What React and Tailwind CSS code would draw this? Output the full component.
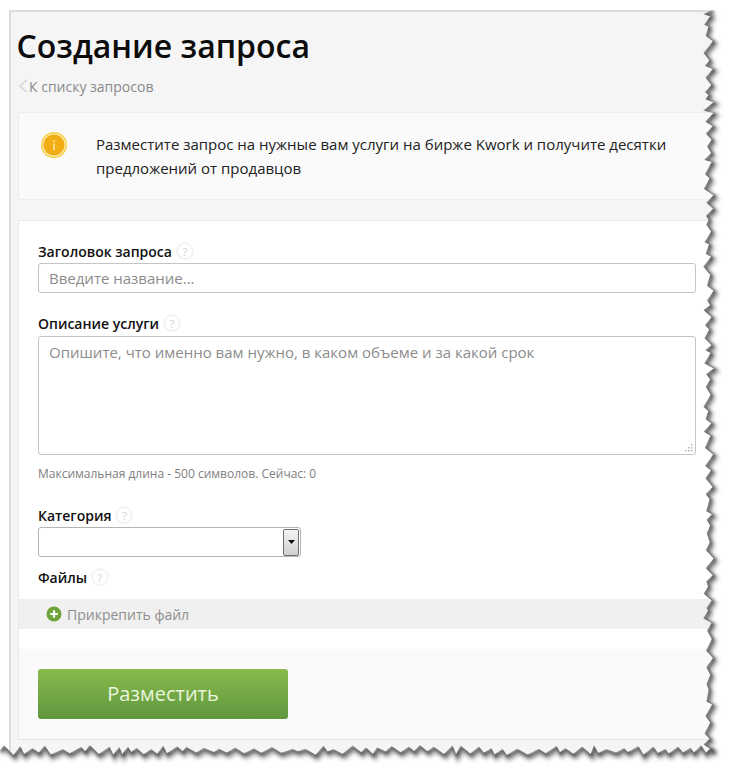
import React from 'react';

// torn paper edge, seeded so the teeth stay the same on every render
function tornPoints() {
  let seed = 23;
  const rnd = () => {
    seed = (seed * 16807) % 2147483647;
    return seed / 2147483647;
  };
  const pts = [[712, 10]];
  let y = 14;
  while (y < 746) {
    pts.push([703 + rnd() * 4, y]);
    y += 2 + rnd() * 7;
    pts.push([708 + rnd() * 6, y]);
    y += 4 + rnd() * 8;
  }
  pts.push([711, 748]);
  let x = 706;
  while (x > 0) {
    pts.push([x, 751 + rnd() * 4]);
    x -= 3 + rnd() * 8;
    pts.push([x, 745 + rnd() * 4]);
    x -= 3 + rnd() * 9;
  }
  pts.push([0, 750]);
  return pts;
}

function TornEdge() {
  const line = tornPoints().map((p) => p[0].toFixed(1) + ',' + p[1].toFixed(1)).join(' ');
  return (
    <svg className="absolute inset-0 pointer-events-none" width="732" height="775" viewBox="0 0 732 775">
      <defs>
        <clipPath id="outside">
          <polygon points={line + ' 0,775 732,775 732,10'} />
        </clipPath>
        <filter id="soft" x="-5%" y="-5%" width="110%" height="110%">
          <feGaussianBlur stdDeviation="1.4" />
        </filter>
        <filter id="wide" x="-5%" y="-5%" width="110%" height="110%">
          <feGaussianBlur stdDeviation="2.2" />
        </filter>
      </defs>
      <polygon points={line + ' 0,775 732,775 732,10'} fill="#ffffff" />
      <g clipPath="url(#outside)">
        <polyline points={line} fill="none" stroke="#9a9a9a" strokeWidth="5" transform="translate(2 3)" filter="url(#wide)" />
        <polyline points={line} fill="none" stroke="#505050" strokeWidth="2.5" transform="translate(1 1.5)" filter="url(#soft)" />
      </g>
    </svg>
  );
}

function Hint() {
  return (
    <span className="inline-flex items-center justify-center w-[18px] h-[18px] rounded-full border-2 border-[#f3f3f3] text-[11px] font-semibold leading-none text-[#dddddd]">
      ?
    </span>
  );
}

function Label({ children }) {
  return (
    <div className="flex items-center gap-[4px] h-[20px] text-[14px] font-semibold text-[#111111]">
      {children}
      <Hint />
    </div>
  );
}

export default function App() {
  return (
    <div className="relative w-[732px] h-[775px] overflow-hidden bg-white font-['Open_Sans',sans-serif]">
      <div className="ml-[9px] mt-[10px] w-[723px] h-[760px] bg-[#f5f5f5] border-t-2 border-l-2 border-[#dcdcdc] pl-[7px]">
        <h1 className="-ml-[1.5px] pt-[12px] text-[32px] leading-[44px] font-semibold text-[#0c0c0c]">Создание запроса</h1>
        <div className="flex items-center mt-[8px] h-[20px] text-[14px] text-[#8a8a8a]">
          <svg width="10" height="14" viewBox="0 0 10 14" className="mr-px">
            <path d="M8.5 1 L2 7 L8.5 13" fill="none" stroke="#d2d2d2" strokeWidth="1.3" />
          </svg>
          К списку запросов
        </div>

        <div className="flex mt-[16px] h-[88px] bg-[#fafafa] border border-[#eeeeee]">
          <svg width="28" height="28" viewBox="0 0 28 28" className="ml-[21px] mt-[18px] shrink-0">
            <circle cx="14" cy="14" r="13" fill="#f6cf3f" />
            <circle cx="14" cy="14" r="11.6" fill="#fff3c4" />
            <circle cx="14" cy="14" r="10.6" fill="#f0ae14" />
            <rect x="13.1" y="12.5" width="1.8" height="6.5" fill="#ffe08a" />
            <rect x="13.1" y="9.2" width="1.8" height="1.9" fill="#ffe08a" />
          </svg>
          <p className="ml-[28px] mt-[19px] w-[600px] text-[15px] leading-[24px] text-[#222222]">
            Разместите запрос на нужные вам услуги на бирже Kwork и получите десятки предложений от продавцов
          </p>
        </div>

        <div className="mt-[20px] bg-white border-t border-l border-[#e8e8e8]">
          <div className="pt-[20px] pl-[19px]">
            <Label>Заголовок запроса</Label>
            <input
              readOnly
              placeholder="Введите название..."
              className="block mt-[2px] w-[658px] h-[30px] px-[10px] rounded-[3px] border border-[#c4c4c4] bg-white text-[15px] outline-none placeholder:text-[#8c8c8c]"
            />
            <div className="mt-[20px]">
              <Label>Описание услуги</Label>
            </div>
            <div className="relative mt-[3px] w-[658px]">
              <textarea
                readOnly
                placeholder="Опишите, что именно вам нужно, в каком объеме и за какой срок"
                className="block w-full h-[119px] px-[10px] py-[5px] rounded-[3px] border border-[#c4c4c4] bg-white text-[15px] leading-[20px] outline-none resize-none placeholder:text-[#8c8c8c]"
              />
              <svg width="10" height="10" viewBox="0 0 10 10" className="absolute right-[2px] bottom-[2px]">
                <path d="M7 1h1.5v1.5H7zM4 4h1.5v1.5H4zM7 4h1.5v1.5H7zM1 7h1.5v1.5H1zM4 7h1.5v1.5H4zM7 7h1.5v1.5H7z" fill="#b5b5b5" />
              </svg>
            </div>
            <div className="mt-[10px] h-[18px] text-[12px] leading-[18px] text-[#808080]">
              Максимальная длина - 500 символов. Сейчас: 0
            </div>
            <div className="mt-[22px]">
              <Label>Категория</Label>
            </div>
            <div className="flex justify-end items-center mt-[2px] w-[263px] h-[30px] pr-px rounded-[3px] border border-[#b4b4b4] bg-white">
              <div className="flex items-center justify-center w-[16px] h-[27px] rounded-[2px] border border-[#707070] bg-gradient-to-b from-[#f4f4f4] to-[#cfcfcf]">
                <svg width="7" height="4" viewBox="0 0 7 4">
                  <path d="M0 0 H7 L3.5 4 Z" fill="#111111" />
                </svg>
              </div>
            </div>
            <div className="mt-[10px]">
              <Label>Файлы</Label>
            </div>
          </div>
          <div className="flex items-center gap-[5px] mt-[12px] h-[30px] pl-[27px] bg-[#f0f0f0] text-[14px] text-[#8f8f8f]">
            <svg width="16" height="16" viewBox="0 0 16 16">
              <circle cx="8" cy="8" r="7.5" fill="#6ea33a" />
              <path d="M8 4.2 V11.8 M4.2 8 H11.8" stroke="#ffffff" strokeWidth="2.2" />
            </svg>
            Прикрепить файл
          </div>
          <div className="h-[20px]" />
          <div className="h-[91px] pt-[20px] pl-[19px] bg-[#fafafa] border-b border-[#e4e4e4]">
            <button className="block w-[250px] h-[50px] rounded-[3px] bg-gradient-to-b from-[#8aba4b] to-[#5f973f] text-[20px] text-[#e9f6dc]">
              Разместить
            </button>
          </div>
        </div>
      </div>
      <TornEdge />
    </div>
  );
}
